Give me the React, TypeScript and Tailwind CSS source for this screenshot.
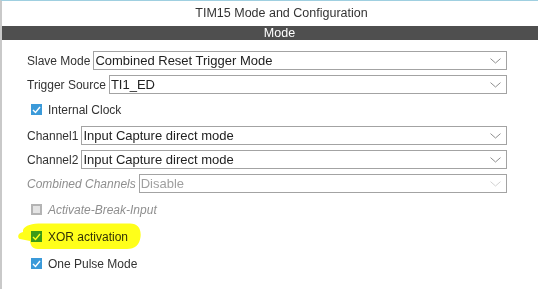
import React from "react";

const Chevron = ({ disabled }: { disabled?: boolean }) => (
  <svg width="11" height="6" viewBox="0 0 11 6" className="shrink-0 mr-[2px]">
    <polyline
      points="0.5,0.6 5.5,5 10.5,0.6"
      fill="none"
      stroke={disabled ? "#d2d2d2" : "#8f8f8f"}
      strokeWidth="1"
    />
  </svg>
);

const Select = ({ value, disabled }: { value: string; disabled?: boolean }) => (
  <div className="flex-1 h-[19px] border border-[#a3a3a3] bg-white flex items-center pl-[1px] pr-[3px]">
    <span
      className={`flex-1 text-[13px] leading-[17px] whitespace-nowrap ${
        disabled ? "text-[#a0a0a0]" : "text-[#222]"
      }`}
    >
      {value}
    </span>
    <Chevron disabled={disabled} />
  </div>
);

const Row = ({
  label,
  value,
  disabled,
  className,
}: {
  label: string;
  value: string;
  disabled?: boolean;
  className?: string;
}) => (
  <div className={`flex items-center gap-[3px] h-[19px] ${className ?? ""}`}>
    <span
      className={`text-[12px] whitespace-nowrap ${
        disabled ? "italic text-[#8f8f8f]" : "text-[#333]"
      }`}
    >
      {label}
    </span>
    <Select value={value} disabled={disabled} />
  </div>
);

const Check = ({
  label,
  checked,
  disabled,
  className,
}: {
  label: string;
  checked?: boolean;
  disabled?: boolean;
  className?: string;
}) => (
  <div className={`flex items-center h-[27px] pl-[4px] ${className ?? ""}`}>
    {checked ? (
      <div className="w-[11px] h-[11px] bg-[#3b9ad9] flex items-center justify-center">
        <svg width="9" height="8" viewBox="0 0 9 8">
          <polyline
            points="1,4 3.5,6.5 8,1"
            fill="none"
            stroke="#ffffff"
            strokeWidth="1.4"
          />
        </svg>
      </div>
    ) : (
      <div className="w-[11px] h-[11px] border-2 border-[#b4b4b4] bg-[#e4e4e4]" />
    )}
    <span
      className={`ml-[6px] text-[12px] whitespace-nowrap ${
        disabled ? "italic text-[#8f8f8f]" : "text-[#333]"
      }`}
    >
      {label}
    </span>
  </div>
);

export default function App() {
  return (
    <div className="relative w-[538px] h-[289px] bg-white border-l-2 border-l-[#c9c9c9] border-t border-t-[#9fcfe0] overflow-hidden font-['Liberation_Sans',Arial,sans-serif]">
      <div className="h-[25px] flex items-center justify-center pl-[23px] text-[12.5px] text-[#333]">
        TIM15 Mode and Configuration
      </div>
      <div className="h-[14px] bg-[#4f4f4f] text-white text-[12.5px] leading-[14px] text-center pl-[19px]">
        Mode
      </div>
      <div className="pl-[25px] pr-[31px] pt-[11px] flex flex-col">
        <Row label="Slave Mode" value="Combined Reset Trigger Mode" />
        <Row label="Trigger Source" value="TI1_ED" className="mt-[5px]" />
        <Check label="Internal Clock" checked className="mt-[2px]" />
        <Row label="Channel1" value="Input Capture direct mode" className="mt-[3px]" />
        <Row label="Channel2" value="Input Capture direct mode" className="mt-[5px]" />
        <Row
          label="Combined Channels"
          value="Disable"
          disabled
          className="mt-[5px]"
        />
        <Check label="Activate-Break-Input" disabled className="mt-[3px]" />
        <Check label="XOR activation" checked />
        <Check label="One Pulse Mode" checked />
      </div>
      <svg
        className="absolute left-0 top-0 pointer-events-none mix-blend-multiply"
        width="538"
        height="289"
        viewBox="0 0 538 289"
      >
        <path
          d="M 21 229 C 23 224, 30 222.5, 40 222.5 L 128 222.5 C 136 222.5, 139.5 228, 138.5 236 C 137.5 244, 133 248, 125 248 L 36 248 C 30 248, 28.5 244, 28 240 L 18 238 C 15 237, 15.5 232, 21 231 Z"
          fill="#ffff1a"
        />
      </svg>
    </div>
  );
}
